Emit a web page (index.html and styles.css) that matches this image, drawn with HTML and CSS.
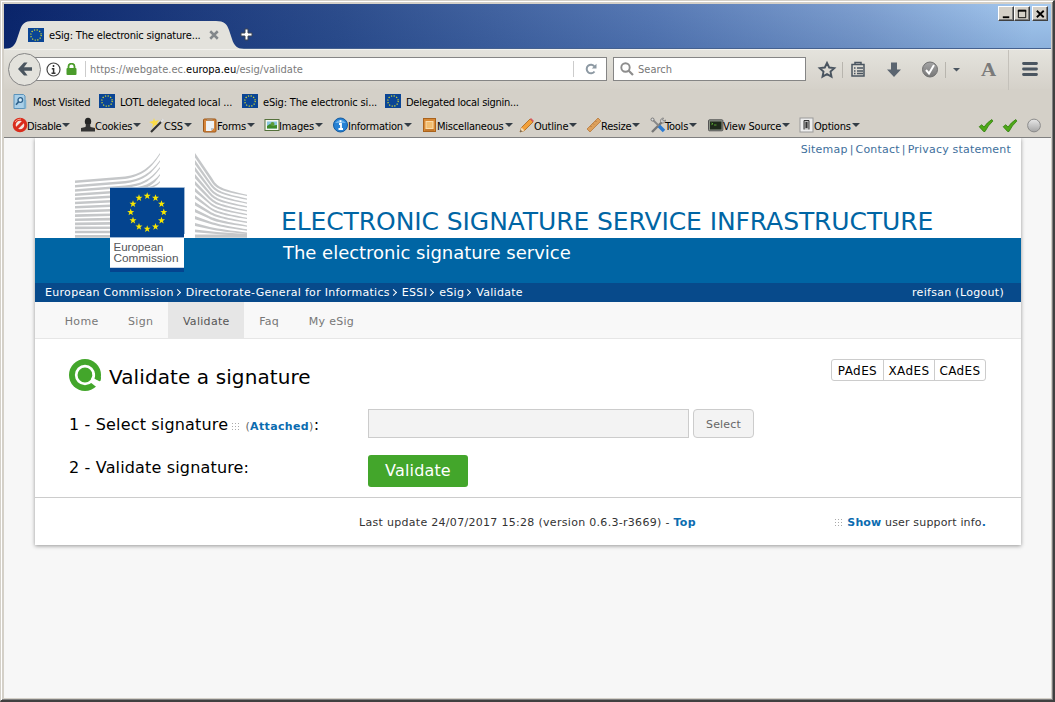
FILE: index.html
```html
<!DOCTYPE html>
<html lang="en">
<head>
<meta charset="utf-8">
<title>eSig: The electronic signature service</title>
<link rel="stylesheet" href="styles.css">
</head>
<body>
<svg class="defs" aria-hidden="true">
  <defs>
    <path id="star" d="M0-3.7L.9-1.2L3.5-1.15L1.4.45L2.2 3L0 1.5L-2.2 3L-1.4.45L-3.5-1.15L-.9-1.2Z"/>
    <symbol id="flag" viewBox="0 0 16 14">
      <rect width="16" height="14" fill="#0a4595"/>
      <circle cx="8" cy="7" r="5.2" fill="none" stroke="#d8dc30" stroke-width="1.2" stroke-dasharray="1.2 1.523"/>
    </symbol>
    <symbol id="check" viewBox="0 0 16 14">
      <path d="M1.2 8.2L3.8 6.2L6 8.6Q9 4 13.8 1L14.8 2.6Q10 7 7 13H5.6Z" fill="#4fa818" stroke="#2f7d0b" stroke-width=".8"/>
    </symbol>
    <linearGradient id="ball" x2="0" y2="1"><stop stop-color="#e8e8e8"/><stop offset="1" stop-color="#a5a5a5"/></linearGradient>
    <linearGradient id="coin" x2="0" y2="1"><stop stop-color="#a5a5a5"/><stop offset="1" stop-color="#777"/></linearGradient>
  </defs>
</svg>
<div class="window">
  <div class="titlebar">
    <div class="tab">
      <svg class="tab-shape" viewBox="0 0 240 28"><path d="M0 28C7 28 11 25 13 18L16 9C18 3 21 0 28 0H212C220 0 223 3 225 9L228 18C230 25 234 28 240 28Z" fill="#e3e2dc"/></svg>
      <svg class="favicon"><use href="#flag"/></svg>
      <span class="tab-title">eSig: The electronic signature...</span>
      <svg class="tab-close" viewBox="0 0 8 8"><path d="M1 1L7 7M7 1L1 7" stroke="#82878a" stroke-width="2"/></svg>
    </div>
    <svg class="tab-new" viewBox="0 0 13 13"><path d="M5 1h3v4h4v3H8v4H5V8H1V5h4Z" fill="#fff" stroke="#3d4552" stroke-width="1"/></svg>
    <div class="controls">
      <div class="ctl"><svg viewBox="0 0 14 13"><path d="M3 10h7" stroke="#000" stroke-width="2"/></svg></div>
      <div class="ctl"><svg viewBox="0 0 14 13"><path d="M2.500 2.500h8v8h-8ZM2 2.500h9M2 3.500h9" fill="none" stroke="#000"/></svg></div>
      <div class="ctl gap"><svg viewBox="0 0 14 13"><path d="M3 3L10.500 10M10.500 3L3 10" stroke="#000" stroke-width="2"/></svg></div>
    </div>
  </div>

  <div class="navbar">
    <div class="address">
      <div class="back"><svg viewBox="0 0 16 14"><path d="M7 .5L1 7L7 13.500H10.500L7 8.700H15V5.300H7L10.500 .5Z" fill="#4a555f"/></svg></div>
      <svg class="info" viewBox="0 0 15 15"><circle cx="7.500" cy="7.500" r="6.500" fill="none" stroke="#444" stroke-width="1.200"/><path d="M7.500 3v2M5.800 6.700H7.600V11M5.500 11.300h4" fill="none" stroke="#333" stroke-width="1.500"/></svg>
      <svg class="lock" viewBox="0 0 11 12"><path d="M2.500 6V3.500a3 2.800 0 0 1 6 0V6" fill="none" stroke="#4b9c2b" stroke-width="1.800"/><rect x=".5" y="5" width="10" height="7" rx="1" fill="#4b9c2b"/></svg>
      <span class="url">https://webgate.ec.<b>europa.eu</b>/esig/validate</span>
      <span class="reload"><svg viewBox="0 0 12 12"><path d="M9.500 8.500A4.300 4.300 0 1 1 9.500 3.500" fill="none" stroke="#8d99a3" stroke-width="2"/><path d="M6.800 5.400H11.500V.7Z" fill="#8d99a3"/></svg></span>
    </div>
    <div class="search">
      <svg viewBox="0 0 14 14"><circle cx="5.500" cy="5.500" r="4.200" fill="none" stroke="#8d8d8d" stroke-width="1.900"/><path d="M8.500 8.500L13 13" stroke="#8d8d8d" stroke-width="2.200"/></svg>
      <span>Search</span>
    </div>
    <svg class="nav-icons" viewBox="0 0 238 40">
      <path d="M14 13L16.200 17.500L21.300 18.100L17.500 21.600L18.500 26.700L14 24.200L9.500 26.700L10.500 21.600L6.700 18.100L11.800 17.500Z" fill="none" stroke="#4a5560" stroke-width="1.900"/>
      <path d="M29.500 12v16M132.500 12v16" stroke="#b8b5ae"/>
      <path d="M39 14.500h12v11.500H39ZM42 14v-1.500h6v1.500M41 18h1.500M44 18h6M41 21h1.500M44 21h6M41 23.500h1.500M44 23.500h6" fill="none" stroke="#4a5560" stroke-width="1.500"/>
      <path d="M78 12.500h6v7h4L81 27L74 19.500h4Z" fill="#5b6570"/>
      <circle cx="117" cy="19.500" r="7.500" fill="url(#coin)" stroke="#707070"/><path d="M113 20L116 23.500L121 15" fill="none" stroke="#fff" stroke-width="2"/>
      <path d="M140 18h7l-3.500 3.500Z" fill="#4a5560"/>
      <path d="M195.500 0v40" stroke="#c4c1ba"/>
      <path d="M210.500 13.500h13M210.500 19h13M210.500 24.500h13" stroke="#4a5560" stroke-width="2.800" stroke-linecap="round"/>
      <text x="168" y="25.500" class="letter" textLength="15" lengthAdjust="spacingAndGlyphs">A</text>
    </svg>
  </div>

  <div class="bookmarks">
    <div class="bm b1"><svg class="mv" viewBox="0 0 14 15"><path d="M1 .5h9.500L12 2v12.500H1Z" fill="#a9cfe8" stroke="#5b93ba"/><path d="M12 6v8.500" stroke="#7db0d0" stroke-width="2.500"/><circle cx="7.300" cy="6" r="2.300" fill="#d9eefa" stroke="#2f628c" stroke-width="1.300"/><path d="M5.600 7.700L3 10.800" stroke="#2f628c" stroke-width="1.700"/></svg><span>Most Visited</span></div>
    <div class="bm"><svg class="favicon"><use href="#flag"/></svg><span>LOTL delegated local ...</span></div>
    <div class="bm"><svg class="favicon"><use href="#flag"/></svg><span>eSig: The electronic si...</span></div>
    <div class="bm last"><svg class="favicon"><use href="#flag"/></svg><span>Delegated local signin...</span></div>
  </div>

  <div class="devbar">
    <div class="tool tight"><svg viewBox="0 0 16 16"><circle cx="8" cy="8" r="5.800" fill="#f4e5df" stroke="#d92c1c" stroke-width="3"/><path d="M12 4L4 12" stroke="#d92c1c" stroke-width="3"/><path d="M3 5Q5 2 9 2" fill="none" stroke="#f79a86"/></svg><span>Disable</span><i></i></div>
    <div class="tool"><svg viewBox="0 0 16 16"><ellipse cx="8" cy="4.500" rx="3.200" ry="3.800" fill="#252525"/><path d="M6 7h4l.5 3 4.500 1V14.500H1V11l4.500-1Z" fill="#333"/></svg><span>Cookies</span><i></i></div>
    <div class="tool"><svg viewBox="0 0 16 16"><path d="M5 1l1 3 4-1-2 3 2 3-4-1-3 3 1-4-4-2 4-1Z" fill="#fbdc48"/><path d="M2 15L14 3" stroke="#333" stroke-width="2.200"/><path d="M12 5L14.500 2.500" stroke="#ddd" stroke-width="2.500"/></svg><span>CSS</span><i></i></div>
    <div class="tool"><svg viewBox="0 0 16 16"><rect x="1.500" y="2" width="12.500" height="13" rx="1" fill="#d6863c" stroke="#9c5719"/><path d="M4 4h8v7l-3 3H4Z" fill="#eef2f6"/><path d="M9 14v-3h3" fill="#b7c4d2"/><rect x="5" y="1" width="5.500" height="3" fill="#b28a63"/></svg><span>Forms</span><i></i></div>
    <div class="tool"><svg viewBox="0 0 16 16"><rect x="1" y="2.500" width="14" height="11" fill="#f5f7ef" stroke="#55713c"/><rect x="3" y="4.500" width="10" height="7" fill="#8ac6df"/><path d="M3 11.500V9l3-2 3 1.500 4-.5v3.500Z" fill="#3d8a28"/><circle cx="8.500" cy="7" r="2" fill="#5b9b36"/></svg><span>Images</span><i></i></div>
    <div class="tool"><svg viewBox="0 0 16 16"><circle cx="7.500" cy="8" r="7" fill="#2681d4" stroke="#155a9e"/><path d="M2 6Q7.500 0 13 6Z" fill="#6cb2ec"/><path d="M7.500 3.200v2M6 7H8V12M5.500 12h4.500" fill="none" stroke="#fff" stroke-width="1.800"/></svg><span>Information</span><i></i></div>
    <div class="tool"><svg viewBox="0 0 16 16"><rect x="1.500" y="1.500" width="12" height="13" fill="#d98a35" stroke="#a9621c"/><rect x="4" y="4.500" width="7" height="7" fill="#f2bd70" stroke="#fbdcaa"/><path d="M3 13h9" stroke="#b26b24"/></svg><span>Miscellaneous</span><i></i></div>
    <div class="tool"><svg viewBox="0 0 16 16"><path d="M1 15l1.500-4.500L11 2l3 3-8.500 8.500Z" fill="#f2a03a" stroke="#a8651d" stroke-width=".8"/><path d="M11 2l1-1 3 3-1 1Z" fill="#dc5560"/><path d="M1 15l1.500-4.500 3 3Z" fill="#f5ddb6"/><path d="M1 15l.8-2 1.200 1.200Z" fill="#333"/></svg><span>Outline</span><i></i></div>
    <div class="tool"><svg viewBox="0 0 16 16"><path d="M1 12L12 1l3 3L4 15Z" fill="#dca05c" stroke="#b9783a" stroke-width=".8"/><path d="M4.500 9l1 1M7 6.500L8 7.500M9.500 4l1 1" stroke="#9b632d" stroke-width=".7"/></svg><span>Resize</span><i></i></div>
    <div class="tool"><svg viewBox="0 0 16 16"><path d="M2 15L13 4" stroke="#777" stroke-width="2.400"/><path d="M2 2L9 9" stroke="#888" stroke-width="1.800"/><path d="M9 9l5 5" stroke="#2d7bd2" stroke-width="3.500"/><path d="M10.500 4.500a3 3 0 0 1 3-3.500l-1 2 1.500 1 1.500-1a3 3 0 0 1-3.500 3Z" fill="#ccc" stroke="#777" stroke-width=".8"/><circle cx="2.500" cy="2.500" r="1.500" fill="#ddd" stroke="#777"/></svg><span>Tools</span><i></i></div>
    <div class="tool"><svg viewBox="0 0 16 16"><rect x=".5" y="2.800" width="14.400" height="11" rx="1" fill="#8d9489" stroke="#555"/><rect x="2" y="4.500" width="11.500" height="8" fill="#1e2a1b"/><path d="M3.500 6l1.500 .8-1.500 .8M6 8h2.500" stroke="#65c036" stroke-width=".8" fill="none"/></svg><span>View Source</span><i></i></div>
    <div class="tool"><svg viewBox="0 0 16 16"><rect x="1" y="1" width="13" height="14" fill="#eee" stroke="#999"/><path d="M5 12.500V3.500h5v9" fill="#bbb" stroke="#333"/><rect x="6.500" y="5" width="2" height="6" fill="#333"/></svg><span>Options</span><i></i></div>
    <div class="status">
      <svg viewBox="0 0 16 14"><use href="#check"/></svg>
      <svg viewBox="0 0 16 14"><use href="#check"/></svg>
      <svg viewBox="0 0 16 16"><circle cx="8" cy="8" r="6.800" fill="url(#ball)" stroke="#878787"/></svg>
    </div>
  </div>

  <div class="viewport">
    <div class="page">
      <header>
        <div class="top-links"><a>Sitemap</a><s>|</s><a>Contact</a><s>|</s><a>Privacy statement</a></div>
        <h1>ELECTRONIC SIGNATURE SERVICE INFRASTRUCTURE</h1>
        <svg class="logo" viewBox="75 153 172 120">
          <g fill="#c5c7c9">
            <path d="M75 180.500L125 176.500C141 174 150 168 160 153v1.500C150 170 142 176 125 179L75 183Z"/>
            <path d="M75 185L125 181C141 179 150 174 160 160.200v1.500C150 176 142 181 125 183.500L75 187.500Z"/>
            <path d="M75 189.200L125 185.500C141 184 150 180 160 167v1.500C150 182 142 186 125 188L75 191.700Z"/>
            <path d="M130 188C142 187 152 184 160 174v1.500C153 186 147 188 140 189Z"/>
            <path d="M142 188C151 187 156 185 160 181v1.500C157 186 154 187 150 188.500Z"/>
            <path d="M75 193.400l36-2.400v2.600l-36 2.300ZM75 197.600l36-2.100v2.600l-36 2ZM75 201.800l36-1.800v2.600l-36 1.700ZM75 206l36-1.500v2.600l-36 1.400ZM75 210.100l36-1.200v2.600l-36 1.200ZM75 214.300l36-.9v2.600l-36 1ZM75 218.400l36-.6v2.600l-36 .7ZM75 222.500l36-.4v2.600l-36 .5ZM75 226.600l36-.2v2.600l-36 .2ZM75 230.700h36v2.600H75ZM75 234.900h36v2.900H75Z"/>
            <path d="M195 153L212 178C217 187 221 189 247 194.700v1.300C221 191 216 189 211 181L195 157.500Z"/>
            <path d="M195 160L211 183C217 191 222 193 247 198.500v1.300C222 195 216 193 210 185L195 164.400Z"/>
            <path d="M195 167L210 187C216 195 222 197 247 202.400v1.300C222 199 215 197 209 189L195 171.300Z"/>
            <path d="M195 174L210 192C216 199 222 201 247 206.300v1.300C222 203 215 201 209 194L195 178.200Z"/>
            <path d="M195 181L210 197C216 203 222 205 247 210.200v1.300C222 207 215 205 209 199L195 185Z"/>
            <path d="M195 188L210 202C216 207 222 209 247 214v1.300C222 211 215 209 209 203.500L195 191.800Z"/>
            <path d="M195 195L210 207C216 211 222 213 247 217.800v1.300C222 215 215 213 209 208.500L195 198.600Z"/>
            <path d="M195 202L210 211.500C216 215 222 217 247 221.600v1.300C222 219 215 217 209 213.500L195 205.500Z"/>
            <path d="M195 209L210 216.500C216 219 222 221 247 225.400v1.400C222 223 215 222 209 218.500L195 212.300Z"/>
            <path d="M195 216L210 221.500C218 224 226 226 247 229.300v1.400C226 228 217 226 209 223.500L195 219.200Z"/>
            <path d="M195 223L210 227C220 229 230 230.500 247 232.500v1.500C230 232.500 218 231 209 229L195 226Z"/>
            <path d="M195 229.500Q220 233 247 234v1.300Q220 235 195 232.300ZM195 234.600H247v3.200H195Z"/>
          </g>
          <path d="M110 187.500h74V272h-74Z" fill="#04448f"/>
          <path d="M110 187.500h74.500V234M110 237.500h74" stroke="#9cb6d3" fill="none"/>
          <rect x="110" y="238" width="74" height="29.500" fill="#fff"/>
          <path d="M110 267.500h74" stroke="#c5d3e4"/>
          <g fill="#f8e600">
            <use href="#star" x="147.200" y="196"/><use href="#star" x="155.500" y="198"/><use href="#star" x="161.500" y="204"/><use href="#star" x="163.800" y="212.300"/><use href="#star" x="161.500" y="220.500"/><use href="#star" x="155.500" y="226.700"/><use href="#star" x="147.200" y="228.900"/><use href="#star" x="139" y="226.700"/><use href="#star" x="133" y="220.500"/><use href="#star" x="130.700" y="212.300"/><use href="#star" x="133" y="204"/><use href="#star" x="139" y="198"/>
          </g>
          <text x="113.500" y="251" textLength="50" lengthAdjust="spacingAndGlyphs">European</text>
          <text x="113.500" y="262" textLength="65" lengthAdjust="spacingAndGlyphs">Commission</text>
        </svg>
      </header>
      <div class="band">The electronic signature service</div>
      <div class="crumbs">
        <div><span>European Commission</span><em></em><span>Directorate-General for Informatics</span><em></em><span>ESSI</span><em></em><span>eSig</span><em></em><span>Validate</span></div>
        <div>reifsan (Logout)</div>
      </div>
      <nav><a>Home</a><a>Sign</a><a class="active">Validate</a><a>Faq</a><a>My eSig</a></nav>
      <main>
        <div class="heading">
          <svg viewBox="0 0 32 32"><circle cx="16" cy="16" r="16" fill="#43a62b"/><circle cx="16" cy="16" r="8.800" fill="none" stroke="#fff" stroke-width="2.700"/><path d="M24 19L33 23.500L28 28.500L21 23Z" fill="#fff"/><path d="M22 15.500H27.500L32 18.500L31.500 22L24.500 19Z" fill="#43a62b"/><path d="M24.500 14Q25.500 18 23 21" fill="none" stroke="#fff" stroke-width="2.700"/></svg>
          <h2>Validate a signature</h2>
          <div class="formats"><span>PAdES</span><span>XAdES</span><span>CAdES</span></div>
        </div>
        <div class="row">
          <label>1 - Select signature <svg class="dots" viewBox="0 0 8 8"><path d="M0 .5h8M0 3.500h8M0 6.500h8" stroke="#aaa" stroke-dasharray="1 2"/></svg><small>(<b>Attached</b>)</small>:</label>
          <div class="file"></div><div class="select">Select</div>
        </div>
        <div class="row second">
          <label>2 - Validate signature:</label>
          <div class="validate">Validate</div>
        </div>
      </main>
      <footer>
        <div class="update">Last update 24/07/2017 15:28 (version 0.6.3-r3669) - <b>Top</b></div>
        <div class="support"><svg class="dots" viewBox="0 0 8 8"><path d="M0 .5h8M0 3.500h8M0 6.500h8" stroke="#aaa" stroke-dasharray="1 2"/></svg><b>Show</b> user support info<b>.</b></div>
      </footer>
    </div>
  </div>
</div>
</body>
</html>
```

FILE: styles.css
```css
* { box-sizing: border-box; }
body { margin: 0; font-family: "DejaVu Sans", Verdana, sans-serif; font-size: 11px; overflow: hidden; }
svg { display: block; flex: none; }
.defs { position: absolute; width: 0; height: 0; }
.window {
  width: 1055px; height: 702px; display: flex; flex-direction: column;
  padding: 3px 2px 2px 3px; background: #d4d0c8;
  border: 1px solid #d4d0c8; border-right: 2px solid #404040; border-bottom: 2px solid #404040;
  box-shadow: inset 1px 1px #fff, inset -1px -1px #808080;
  font-family: "DejaVu Sans Condensed", Tahoma, sans-serif; letter-spacing: -.17px; color: #000;
}
.titlebar {
  flex: none; height: 45px; display: flex; align-items: flex-start; border-bottom: 1px solid #45618f;
  background: linear-gradient(#0000, rgba(10,50,120,.16)), linear-gradient(97deg, #0a246a, #2d4d8c 32%, #587ab5 62%, #7fa0d0 82%, #a6caf0 98%);
}
.tab { position: relative; width: 234px; height: 28px; margin: 17px 0 0; display: flex; align-items: center; padding-left: 24px; }
.tab-shape { position: absolute; left: 0; top: 0; width: 240px; height: 28px; }
.favicon { position: relative; width: 16px; height: 14px; }
.tab-title { position: relative; width: 155px; margin-left: 5px; white-space: nowrap; }
.tab-close { position: relative; width: 10px; height: 10px; margin-left: 5px; }
.tab-new { width: 13px; height: 13px; margin: 24px 0 0 2px; }
.controls { margin: 2px 3px 0 auto; display: flex; }
.ctl {
  width: 16px; height: 15px; padding: 1px; background: #d4d0c8; border: 1px solid;
  border-color: #fff #404040 #404040 #fff; box-shadow: inset -1px -1px #808080;
}
.ctl.gap { margin-left: 2px; }
.ctl svg { width: 13px; height: 12px; }
.navbar {
  flex: none; height: 40px; display: flex; align-items: center; padding: 0 0 1px 4px;
  background: linear-gradient(#e4e3dd, #d5d1c9); border-top: 1px solid #f1f0ec;
}
.address, .search { flex: none; height: 24px; display: flex; align-items: center; background: #fff; border: 1px solid #858585; }
.address { width: 582px; margin-left: 17px; }
.back {
  flex: none; width: 33px; height: 33px; margin-left: -18px; border-radius: 50%; background: #e3e2dc;
  border: 1px solid #858585; display: flex; align-items: center; justify-content: center;
}
.back svg { width: 16px; height: 14px; }
.info { width: 15px; height: 15px; margin-left: 5px; }
.lock { width: 11px; height: 12px; margin-left: 5px; }
.url { height: 16px; margin-left: 8px; padding-left: 4px; border-left: 1px solid #ccc; color: #7b7b7b; line-height: 17px; letter-spacing: 0; }
.url b { font-weight: normal; color: #000; }
.reload { margin-left: auto; width: 33px; height: 16px; padding: 2px 0 0 11px; border-left: 1px solid #ccc; }
.reload svg { width: 12px; height: 12px; }
.search { width: 193px; margin-left: 6px; padding-left: 6px; color: #777; letter-spacing: 0; line-height: 24px; }
.search svg { width: 14px; height: 14px; margin: 0 4px 1px 0; }
.search span { padding-top: 1px; }
.nav-icons { width: 238px; height: 40px; margin: 1px 0 0 7px; }
.letter { font: bold 19px "Liberation Serif", serif; fill: #7a7a7a; }
.bookmarks { flex: none; height: 24px; display: flex; align-items: center; padding: 0 0 0 9px; }
.bm { display: flex; align-items: center; gap: 5px; white-space: nowrap; width: 143px; }
.bm span { padding-top: 2px; }
.b1 { width: 86px; letter-spacing: -.25px; }
.b1 span { margin-left: 1px; }
.last { letter-spacing: -.27px; }
.mv { width: 14px; height: 15px; }
.devbar {
  flex: none; height: 25px; display: grid; align-items: center; padding-left: 8px; border-bottom: 1px solid #808080;
  grid-template-columns: 68px 69px 53px 62px 69px 89px 97px 67px 64px 58px 91px 90px 1fr;
}
.tool { display: flex; align-items: center; white-space: nowrap; letter-spacing: -.22px; }
.tool.tight { letter-spacing: -.35px; }
.tool svg { width: 16px; height: 16px; margin-right: -1px; }
.tool span { padding-top: 2px; }
.tool i { margin-left: 1px; border: 4px solid transparent; border-top-color: #333c45; border-bottom: 0; }
.status { display: flex; justify-content: flex-end; gap: 8px; padding-right: 9px; align-items: center; }
.status svg { width: 16px; height: 15px; }
.viewport { flex: 1; background: #f7f7f7; overflow: hidden; }
.page {
  width: 986px; height: 407px; margin-left: 31px; background: #fff; box-shadow: 0 1px 4px rgba(0,0,0,.4);
  font-family: "DejaVu Sans", Verdana, sans-serif; letter-spacing: .3px; display: flex; flex-direction: column;
}
header { position: relative; flex: none; height: 100px; }
.top-links { display: flex; justify-content: flex-end; padding: 5px 10px 0 0; line-height: 14px; color: #3e6f9c; gap: 2px; letter-spacing: .2px; }
.top-links s { text-decoration: none; }
h1 { margin: 50px 0 0 246px; font: 25px/30px "DejaVu Sans", Verdana, sans-serif; color: #0065a4; white-space: nowrap; letter-spacing: -.09px; }
.logo { position: absolute; left: 40px; top: 15px; width: 172px; height: 120px; }
.logo text { font: 10px "Liberation Sans", sans-serif; fill: #53565a; letter-spacing: 0; }
.band { flex: none; height: 45px; padding: 4px 0 0 248px; background: #0065a4; color: #fff; font-size: 18px; line-height: 22px; letter-spacing: -.02px; }
.crumbs { flex: none; height: 19px; display: flex; justify-content: space-between; padding: 0 17px 0 10px; background: #074a8b; color: #fff; line-height: 19px; }
.crumbs div { display: flex; align-items: center; white-space: nowrap; }
.crumbs em { width: 5px; height: 5px; margin: 0 6px 0 1px; border: solid #fff; border-width: 1.500px 1.500px 0 0; transform: rotate(45deg); }
nav { flex: none; height: 37px; display: flex; padding-left: 15px; background: #f8f8f8; border-bottom: 1px solid #e6e6e6; color: #777; line-height: 39px; }
nav a { padding: 0 14.800px; height: 36px; }
nav .active { background: #e6e6e6; color: #555; }
main { flex: none; height: 158px; padding: 20px 35px 0 34px; color: #000; }
.heading { display: flex; align-items: flex-start; }
.heading svg { width: 32px; height: 32px; }
h2 { margin: 4px 0 0 8px; font: 20px/28px "DejaVu Sans", Verdana, sans-serif; letter-spacing: .1px; }
.formats { margin-left: auto; display: flex; height: 22px; border: 1px solid #ccc; border-radius: 3px; font-size: 12px; line-height: 22px; letter-spacing: .4px; }
.formats span { width: 51px; text-align: center; }
.formats span + span { border-left: 1px solid #ccc; }
.row { display: flex; margin-top: 18px; height: 29px; font-size: 16px; letter-spacing: .16px; }
label { width: 299px; line-height: 31px; white-space: nowrap; }
label .dots { margin: 0 5px 0 -1px; }
.dots { display: inline-block; width: 8px; height: 8px; vertical-align: -1px; }
small { font-size: 11px; color: #666; letter-spacing: .35px; }
small b, footer b { color: #0b6cb0; }
.file { width: 321px; background: #f3f3f3; border: 1px solid #ccc; }
.select { width: 61px; margin-left: 4px; border: 1px solid #ccc; border-radius: 4px; background: #f3f3f3; color: #666; font-size: 11px; line-height: 29px; text-align: center; }
.second { margin-top: 17px; }
.second label { line-height: 25px; }
.validate { width: 100px; height: 32px; border-radius: 3px; background: #43a62b; color: #fff; line-height: 32px; text-align: center; }
footer { flex: none; height: 48px; display: flex; justify-content: space-between; padding: 18px 35px 0 324px; border-top: 1px solid #ccc; color: #333; line-height: 14px; }
.support { letter-spacing: .16px; }
.support .dots { margin-right: 4px; }
```
